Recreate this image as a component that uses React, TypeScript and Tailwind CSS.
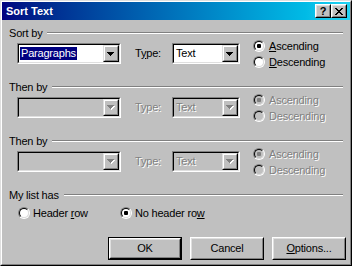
import React from "react";

const FONT = "font-['Liberation_Sans',Arial,sans-serif]";
const DIS = "text-[#808080] [text-shadow:1px_1px_0_#ffffff]";

function Raised({ className = "", inner = "", children }: { className?: string; inner?: string; children?: React.ReactNode }) {
  return (
    <div className={`border border-t-white border-l-white border-b-black border-r-black ${className}`}>
      <div className={`h-full w-full border border-t-[#dfdfdf] border-l-[#dfdfdf] border-b-[#808080] border-r-[#808080] bg-[#c0c0c0] flex items-center justify-center ${inner}`}>
        {children}
      </div>
    </div>
  );
}

function Arrow({ disabled }: { disabled?: boolean }) {
  if (disabled) {
    return (
      <svg width="8" height="5" viewBox="0 0 8 5">
        <g fill="#ffffff">
          <rect x="1" y="1" width="7" height="1" />
          <rect x="2" y="2" width="5" height="1" />
          <rect x="3" y="3" width="3" height="1" />
          <rect x="4" y="4" width="1" height="1" />
        </g>
        <g fill="#808080">
          <rect x="0" y="0" width="7" height="1" />
          <rect x="1" y="1" width="5" height="1" />
          <rect x="2" y="2" width="3" height="1" />
          <rect x="3" y="3" width="1" height="1" />
        </g>
      </svg>
    );
  }
  return (
    <svg width="7" height="4" viewBox="0 0 7 4" className="mr-[1px]">
      <g fill="#000">
        <rect x="0" y="0" width="7" height="1" />
        <rect x="1" y="1" width="5" height="1" />
        <rect x="2" y="2" width="3" height="1" />
        <rect x="3" y="3" width="1" height="1" />
      </g>
    </svg>
  );
}

function Combo({ className = "", disabled, children }: { className?: string; disabled?: boolean; children?: React.ReactNode }) {
  return (
    <div className={`h-[21px] border border-t-[#808080] border-l-[#808080] border-b-white border-r-white ${className}`}>
      <div className={`h-full flex items-center border border-t-black border-l-black border-b-[#dfdfdf] border-r-[#dfdfdf] ${disabled ? "bg-[#c0c0c0]" : "bg-white"}`}>
        <div className="flex-1 h-full flex items-center overflow-hidden">{children}</div>
        <div className="w-[16px] h-[17px] border border-t-[#dfdfdf] border-l-[#dfdfdf] border-b-black border-r-black">
          <div className="h-full w-full border border-t-white border-l-white border-b-[#808080] border-r-[#808080] bg-[#c0c0c0] flex items-center justify-center">
            <Arrow disabled={disabled} />
          </div>
        </div>
      </div>
    </div>
  );
}

function Radio({ checked, disabled }: { checked?: boolean; disabled?: boolean }) {
  return (
    <div className="w-[12px] h-[12px] shrink-0 rounded-full border border-t-[#808080] border-l-[#808080] border-b-white border-r-white">
      <div className={`w-full h-full rounded-full border border-t-black border-l-black border-b-[#dfdfdf] border-r-[#dfdfdf] flex items-center justify-center ${disabled ? "bg-[#c0c0c0]" : "bg-white"}`}>
        {checked && <div className={`w-[4px] h-[4px] rounded-[1px] ${disabled ? "bg-[#808080]" : "bg-black"}`} />}
      </div>
    </div>
  );
}

function GroupLabel({ children }: { children: React.ReactNode }) {
  return (
    <div className="flex items-center h-[14px] pl-[7px] pr-[7px]">
      <span className="whitespace-nowrap">{children}</span>
      <div className="flex-1 ml-[5px] h-[2px] border-t border-t-[#808080] border-b border-b-white" />
    </div>
  );
}

function SortGroup({ label, disabled }: { label: string; disabled?: boolean }) {
  return (
    <div className="flex flex-col">
      <GroupLabel>{label}</GroupLabel>
      <div className="flex items-start mt-[-2px] h-[42px]">
        <Combo className="ml-[15px] mt-[5px] w-[104px]" disabled={disabled}>
          {!disabled && (
            <span className="ml-[1px] px-[1px] bg-[#000080] text-white leading-[13px]">Paragraphs</span>
          )}
        </Combo>
        <div className={`ml-[14px] mt-[5px] h-[21px] w-[37px] flex items-center ${disabled ? DIS : ""}`}>
          {disabled ? "Type:" : (<span>T<span className="underline underline-offset-[1px]">y</span>pe:</span>)}
        </div>
        <Combo className="mt-[5px] w-[68px]" disabled={disabled}>
          <span className={`pl-[2px] ${disabled ? DIS : ""}`}>Text</span>
        </Combo>
        <div className="ml-[13px] flex flex-col">
          <div className="h-[16px] flex items-center gap-[4px]">
            <Radio checked disabled={disabled} />
            <span className={disabled ? DIS : ""}>
              {disabled ? "Ascending" : (<><span className="underline underline-offset-[1px]">A</span>scending</>)}
            </span>
          </div>
          <div className="h-[16px] flex items-center gap-[4px]">
            <Radio disabled={disabled} />
            <span className={disabled ? DIS : ""}>
              {disabled ? "Descending" : (<><span className="underline underline-offset-[1px]">D</span>escending</>)}
            </span>
          </div>
        </div>
      </div>
    </div>
  );
}

export default function App() {
  return (
    <div className={`w-[352px] h-[266px] bg-[#c0c0c0] border border-t-[#dfdfdf] border-l-[#dfdfdf] border-b-black border-r-black text-[11px] leading-[13px] tracking-[-0.2px] text-black ${FONT}`}>
      <div className="w-full h-full flex flex-col border border-t-white border-l-white border-b-[#808080] border-r-[#808080]">
        {/* Title bar */}
        <div className="h-[18px] flex items-center bg-gradient-to-r from-[#000080] to-[#22d4f4] pl-[4px] pr-[3px]">
          <span className="flex-1 text-white font-bold tracking-normal">Sort Text</span>
          <Raised className="w-[16px] h-[14px]">
            <span className="font-bold text-[11px] leading-[10px] tracking-normal">?</span>
          </Raised>
          <Raised className="w-[16px] h-[14px]">
            <svg width="8" height="7" viewBox="0 0 8 7">
              <g fill="#000">
                <rect x="0" y="0" width="2" height="1" />
                <rect x="6" y="0" width="2" height="1" />
                <rect x="1" y="1" width="2" height="1" />
                <rect x="5" y="1" width="2" height="1" />
                <rect x="2" y="2" width="4" height="1" />
                <rect x="3" y="3" width="2" height="1" />
                <rect x="2" y="4" width="4" height="1" />
                <rect x="1" y="5" width="2" height="1" />
                <rect x="5" y="5" width="2" height="1" />
                <rect x="0" y="6" width="2" height="1" />
                <rect x="6" y="6" width="2" height="1" />
              </g>
            </svg>
          </Raised>
        </div>

        <div className="mt-[6px] flex flex-col">
          <SortGroup label="Sort by" />
          <SortGroup label="Then by" disabled />
          <SortGroup label="Then by" disabled />
          <GroupLabel>My list has</GroupLabel>
          <div className="mt-[4px] h-[14px] flex items-center pl-[16px]">
            <div className="w-[102px] flex items-center gap-[3px]">
              <Radio />
              <span>Header <span className="underline underline-offset-[1px]">r</span>ow</span>
            </div>
            <div className="flex items-center gap-[3px]">
              <Radio checked />
              <span>No header ro<span className="underline underline-offset-[1px]">w</span></span>
            </div>
          </div>
          <div className="mt-[17px] flex pl-[106px] gap-[8px]">
            <div className="w-[74px] h-[23px] border border-black">
              <Raised className="w-full h-full">OK</Raised>
            </div>
            <Raised className="w-[74px] h-[23px]">Cancel</Raised>
            <Raised className="w-[74px] h-[23px]">
              <span><span className="underline underline-offset-[1px]">O</span>ptions...</span>
            </Raised>
          </div>
        </div>
      </div>
    </div>
  );
}
